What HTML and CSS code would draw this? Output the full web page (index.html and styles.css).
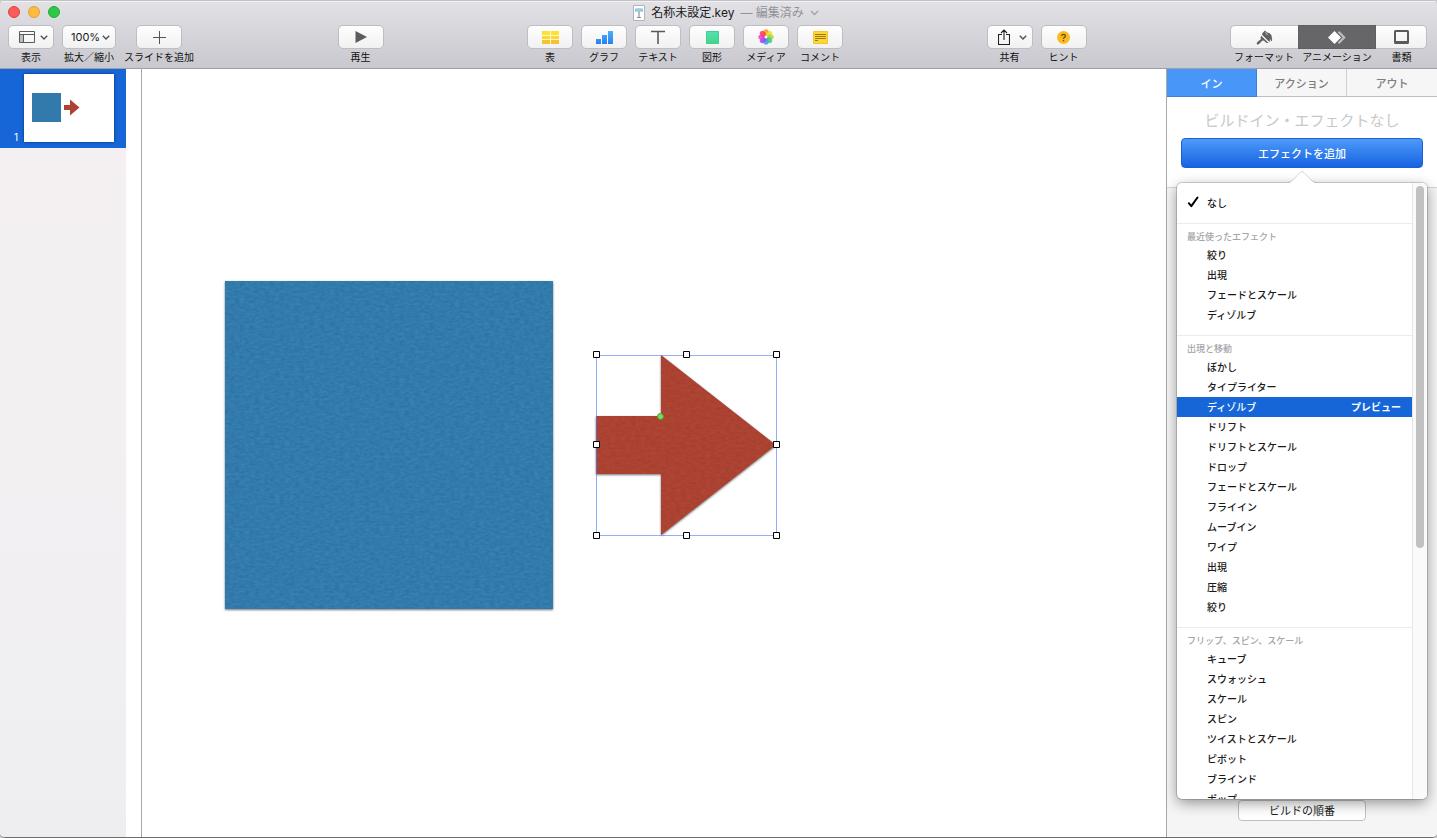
FILE: index.html
```html
<!DOCTYPE html>
<html lang="ja">
<head>
<meta charset="utf-8">
<title>名称未設定.key</title>
<link rel="stylesheet" href="styles.css">
</head>
<body>
<div class="window">
  <header class="chrome">
    <div class="titlebar">
      <div class="lights">
        <button class="light light-close" aria-label="閉じる"></button>
        <button class="light light-min" aria-label="しまう"></button>
        <button class="light light-max" aria-label="拡大"></button>
      </div>
      <div class="doc-title">
        <svg class="doc-icon" width="12" height="16" viewBox="0 0 12 16"><path d="M.5.5h11v15H.5z" fill="#fff" stroke="#b4b4b8"/><path d="M2.500 3.500h7l.5 3H2z" fill="#58b6e6"/><path d="M3 5h6" stroke="#d9e8c8"/><path d="M6 6.500V12M4 12.500h4" stroke="#8a9094" stroke-width="1.200"/></svg>
        <h1 class="doc-name">名称未設定.key</h1>
        <span class="doc-state">— 編集済み</span>
        <svg width="9" height="6" viewBox="0 0 9 6"><path d="M1 1l3.500 3.500L8 1" fill="none" stroke="#a2a1a7" stroke-width="1.300"/></svg>
      </div>
    </div>
    <nav class="toolbar">
      <div class="group">
        <div class="tool">
          <button class="tool-btn with-menu" aria-labelledby="t-view">
            <svg width="16" height="12" viewBox="0 0 16 12"><path d="M1 4h3.500v7H1z" fill="#bdbdbd"/><path d="M.5.5h15v11H.5zM.5 3.500h15M4.500 3.500v8" fill="none" stroke="#5a5a5a"/></svg>
            <svg width="8" height="5" viewBox="0 0 8 5"><path d="M.8.8L4 4 7.200.8" fill="none" stroke="#505050" stroke-width="1.400"/></svg>
          </button>
          <span class="tool-label" id="t-view">表示</span>
        </div>
        <div class="tool">
          <div class="zoom-box">
            <select class="tool-btn zoom" id="zoom"><option>100%</option></select>
            <svg class="zoom-chev" width="8" height="5" viewBox="0 0 8 5"><path d="M.8.8L4 4 7.200.8" fill="none" stroke="#505050" stroke-width="1.400"/></svg>
          </div>
          <label class="tool-label" for="zoom">拡大／縮小</label>
        </div>
        <div class="tool">
          <button class="tool-btn" aria-labelledby="t-add"><svg width="13" height="13" viewBox="0 0 13 13"><path d="M0 6.500h13M6.500 0v13" stroke="#555"/></svg></button>
          <span class="tool-label" id="t-add">スライドを追加</span>
        </div>
      </div>
      <div class="group">
        <div class="tool">
          <button class="tool-btn" aria-labelledby="t-play"><svg width="12" height="12" viewBox="0 0 12 12"><path d="M.5 0L12 6 .5 12z" fill="#5c5c5c"/></svg></button>
          <span class="tool-label" id="t-play">再生</span>
        </div>
      </div>
      <div class="group">
        <div class="tool">
          <button class="tool-btn" aria-labelledby="t-table"><svg width="17" height="13" viewBox="0 0 17 13"><path d="M0 0h17v4H0z" fill="#fde233"/><path d="M0 4h17v5H0z" fill="#fcd636"/><path d="M0 9h17v4H0z" fill="#f6c235"/><path d="M0 4.500h17M0 8.500h17M8.500 0v13" stroke="#fff6c4"/></svg></button>
          <span class="tool-label" id="t-table">表</span>
        </div>
        <div class="tool">
          <button class="tool-btn" aria-labelledby="t-chart"><svg width="17" height="13" viewBox="0 0 17 13"><defs><linearGradient id="bar" x2="0" y2="13" gradientUnits="userSpaceOnUse"><stop stop-color="#49b3f8"/><stop offset="1" stop-color="#2a7ff0"/></linearGradient></defs><path d="M0 8h5v5H0zM6 4h5v9H6zM12 0h5v13h-5z" fill="url(#bar)"/></svg></button>
          <span class="tool-label" id="t-chart">グラフ</span>
        </div>
        <div class="tool">
          <button class="tool-btn" aria-labelledby="t-text"><svg width="14" height="14" viewBox="0 0 14 14"><path d="M0 1.500h14M7 1.500V14" stroke="#5a5a5a" stroke-width="1.600"/></svg></button>
          <span class="tool-label" id="t-text">テキスト</span>
        </div>
        <div class="tool">
          <button class="tool-btn" aria-labelledby="t-shape"><svg width="13" height="13" viewBox="0 0 13 13"><defs><linearGradient id="shp" x2="0" y2="1"><stop stop-color="#55e0b4"/><stop offset="1" stop-color="#43d685"/></linearGradient></defs><path d="M.5.5h12v12H.5z" fill="url(#shp)" stroke="#3fcf91"/></svg></button>
          <span class="tool-label" id="t-shape">図形</span>
        </div>
        <div class="tool">
          <button class="tool-btn" aria-labelledby="t-media"><svg width="16" height="16" viewBox="-8 -8 16 16"><g class="petals"><ellipse cy="-4.500" rx="2.600" ry="3.200" fill="#fb8f20"/><ellipse cy="-4.500" rx="2.600" ry="3.200" fill="#f0dc20" transform="rotate(45)"/><ellipse cy="-4.500" rx="2.600" ry="3.200" fill="#a0dc30" transform="rotate(90)"/><ellipse cy="-4.500" rx="2.600" ry="3.200" fill="#3ccb80" transform="rotate(135)"/><ellipse cy="-4.500" rx="2.600" ry="3.200" fill="#3f98e8" transform="rotate(180)"/><ellipse cy="-4.500" rx="2.600" ry="3.200" fill="#9a40f0" transform="rotate(225)"/><ellipse cy="-4.500" rx="2.600" ry="3.200" fill="#f03cd8" transform="rotate(270)"/><ellipse cy="-4.500" rx="2.600" ry="3.200" fill="#fa3c50" transform="rotate(315)"/></g></svg></button>
          <span class="tool-label" id="t-media">メディア</span>
        </div>
        <div class="tool">
          <button class="tool-btn" aria-labelledby="t-comment"><svg width="15" height="13" viewBox="0 0 15 13"><path d="M.5.5h14v12H.5z" fill="#fdd835" stroke="#f5c32c"/><path d="M2 3.500h11M2 5.500h11M2 7.500h11M2 9.500h3" stroke="#9a7a1a"/></svg></button>
          <span class="tool-label" id="t-comment">コメント</span>
        </div>
      </div>
      <div class="group">
        <div class="tool">
          <button class="tool-btn with-menu" aria-labelledby="t-share">
            <svg width="12" height="16" viewBox="0 0 12 16"><path d="M4 5.500H.5v10h11v-10H8M6 11V1.500M3 4l3-3 3 3" fill="none" stroke="#222" stroke-width="1.100"/></svg>
            <svg width="8" height="5" viewBox="0 0 8 5"><path d="M.8.8L4 4 7.200.8" fill="none" stroke="#505050" stroke-width="1.400"/></svg>
          </button>
          <span class="tool-label" id="t-share">共有</span>
        </div>
        <div class="tool">
          <button class="tool-btn" aria-labelledby="t-hint"><svg width="13" height="13" viewBox="0 0 13 13"><circle cx="6.500" cy="6.500" r="6.500" fill="#fbba21"/><path d="M4.600 5.100Q4.700 3.300 6.500 3.300T8.400 4.900Q8.400 5.800 7.300 6.400 6.500 6.900 6.500 8M6.500 9v1.300" fill="none" stroke="#6b4a08" stroke-width="1.200"/></svg></button>
          <span class="tool-label" id="t-hint">ヒント</span>
        </div>
      </div>
      <div class="group segments">
        <div class="tool seg seg-format">
          <button class="tool-btn" aria-labelledby="t-format"><svg width="17" height="15" viewBox="0 0 17 15"><path d="M6.500 3L9 .5 11 2.500Q14 2.500 15.500 5.500L16.200 10Q15.800 12 14.800 10.500L14 8.500 13.500 12.500 6 5z" fill="#606060"/><path d="M5.300 5.700L12.500 12.900 10.500 13 8 10.800 6.500 10.500 3 14Q1.800 15 1 14.200T1.200 12.300L5 9 4.500 7.500z" fill="#606060"/><path d="M5.500 4.800l7.800 7.800" stroke="#f6f6f6"/><path d="M9.500 2.500l2 2.500" stroke="#e8e8e8" stroke-width=".8"/></svg></button>
          <span class="tool-label" id="t-format">フォーマット</span>
        </div>
        <div class="tool seg seg-anim">
          <button class="tool-btn active" aria-pressed="true" aria-labelledby="t-anim"><svg width="18" height="13" viewBox="0 0 18 13"><path d="M10.500.8l5.700 5.700-5.700 5.700" fill="none" stroke="#bcbcbd" stroke-width="2.200"/><path d="M6.500 0L13 6.500 6.500 13 0 6.500z" fill="#fff"/></svg></button>
          <span class="tool-label" id="t-anim">アニメーション</span>
        </div>
        <div class="tool seg seg-doc">
          <button class="tool-btn" aria-labelledby="t-doc"><svg width="15" height="14" viewBox="0 0 15 14"><rect x="1" y="1" width="13" height="12" rx=".5" fill="none" stroke="#5a5a5a" stroke-width="2"/><path d="M1 11.500h13" stroke="#5a5a5a"/></svg></button>
          <span class="tool-label" id="t-doc">書類</span>
        </div>
      </div>
    </nav>
  </header>

  <div class="workspace">
    <aside class="slides">
      <button class="slide-row">
        <span class="slide-num">1</span>
        <span class="thumb">
          <svg width="90" height="68" viewBox="0 0 90 68"><path d="M8 19h29v29H8z" fill="#327aac"/><path d="M40 31h6v-5.500l9.500 8L46 41.500V36h-6z" fill="#ae4333"/></svg>
        </span>
      </button>
    </aside>
    <main class="canvas">
      <svg class="shape square" width="328" height="328" viewBox="0 0 328 328">
        <defs>
          <filter id="paper-blue" x="0" y="0" width="1" height="1" color-interpolation-filters="sRGB"><feTurbulence type="fractalNoise" baseFrequency=".2 .4" numOctaves="4" seed="4"/><feColorMatrix values="0 0 0 0 .08  0 0 0 0 .32  0 0 0 0 .5  .5 0 0 0 -.12"/><feComposite in2="SourceGraphic" operator="in"/></filter>
        </defs>
        <path d="M0 0h328v328H0z" fill="#3781b3"/>
        <path d="M0 0h328v328H0z" filter="url(#paper-blue)"/>
      </svg>
      <div class="selection">
        <svg class="shape arrow" width="181" height="181" viewBox="0 0 181 181">
          <defs>
            <filter id="paper-red" x="0" y="0" width="1" height="1" color-interpolation-filters="sRGB"><feTurbulence type="fractalNoise" baseFrequency=".2 .4" numOctaves="4" seed="8"/><feColorMatrix values="0 0 0 0 .54  0 0 0 0 .18  0 0 0 0 .12  .5 0 0 0 -.12"/><feComposite in2="SourceGraphic" operator="in"/></filter>
          </defs>
          <path d="M0 61h65V0l115 90L65 180v-61H0z" fill="#b14635"/>
          <path d="M0 61h65V0l115 90L65 180v-61H0z" filter="url(#paper-red)"/>
        </svg>
        <svg class="handles" width="189" height="190" viewBox="-4 -5 189 190">
          <path d="M.5.500h180v180H.5z" fill="none" stroke="#4a7cf4" stroke-opacity=".6"/>
          <g fill="#fff" stroke="#000"><path d="M-2.500-3.500h6v6h-6zM87.500-3.500h6v6h-6zM177.500-3.500h6v6h-6zM-2.500 86.500h6v6h-6zM177.500 86.500h6v6h-6zM-2.500 177.500h6v6h-6zM87.500 177.500h6v6h-6zM177.500 177.500h6v6h-6z"/></g>
          <circle cx="64.500" cy="61.500" r="3" fill="#7ddc54" stroke="#4a9436"/>
        </svg>
      </div>
    </main>
    <aside class="inspector">
      <div class="tabs" role="tablist">
        <button class="tab current" role="tab" aria-selected="true">イン</button>
        <button class="tab" role="tab">アクション</button>
        <button class="tab" role="tab">アウト</button>
      </div>
      <section class="effect">
        <h2 class="effect-title">ビルドイン・エフェクトなし</h2>
        <button class="add-effect">エフェクトを追加</button>
      </section>
      <div class="order"><button class="order-btn">ビルドの順番</button></div>

      <div class="popover">
        <svg class="pointer" width="28" height="13" viewBox="0 0 28 13"><path d="M0 12Q3 11.500 5 9L12 1.500Q14-.5 16 1.500L23 9Q25 11.500 28 12V13H0z" fill="#fff"/><path d="M0 11.500Q3 11 5 9L12 1.500Q14-.5 16 1.500L23 9Q25 11 28 11.500" fill="none" stroke="#000" stroke-opacity=".16"/></svg>
        <div class="menu-clip">
          <div class="menu">
            <button class="none-item"><svg width="12" height="12" viewBox="0 0 12 12"><path d="M1.800 7.200L4.300 10.200 10.500 1.500" fill="none" stroke="#000" stroke-width="2" stroke-linecap="round" stroke-linejoin="round"/></svg>なし</button>
            <section class="menu-group">
              <h3 class="menu-head">最近使ったエフェクト</h3>
              <button class="item">絞り</button>
              <button class="item">出現</button>
              <button class="item">フェードとスケール</button>
              <button class="item">ディゾルブ</button>
            </section>
            <section class="menu-group">
              <h3 class="menu-head">出現と移動</h3>
              <button class="item">ぼかし</button>
              <button class="item">タイプライター</button>
              <button class="item chosen">ディゾルブ<strong>プレビュー</strong></button>
              <button class="item">ドリフト</button>
              <button class="item">ドリフトとスケール</button>
              <button class="item">ドロップ</button>
              <button class="item">フェードとスケール</button>
              <button class="item">フライイン</button>
              <button class="item">ムーブイン</button>
              <button class="item">ワイプ</button>
              <button class="item">出現</button>
              <button class="item">圧縮</button>
              <button class="item">絞り</button>
            </section>
            <section class="menu-group">
              <h3 class="menu-head">フリップ、スピン、スケール</h3>
              <button class="item">キューブ</button>
              <button class="item">スウォッシュ</button>
              <button class="item">スケール</button>
              <button class="item">スピン</button>
              <button class="item">ツイストとスケール</button>
              <button class="item">ピボット</button>
              <button class="item">ブラインド</button>
              <button class="item">ポップ</button>
            </section>
          </div>
          <div class="track"><div class="thumb-bar"></div></div>
        </div>
      </div>
    </aside>
  </div>
</div>
</body>
</html>
```
FILE: styles.css
```css
* { box-sizing: border-box; }

body {
  margin: 0;
  background: #c9c9cb;
  font-family: "Liberation Sans", "Noto Sans CJK JP", sans-serif;
  font-size: 10px;
  color: #1a1a1a;
}

button, select {
  margin: 0;
  padding: 0;
  border: 0;
  background: none;
  font: inherit;
  color: inherit;
}

h1, h2, h3 { margin: 0; font-weight: 400; }
svg { display: block; flex: none; }

.window {
  display: flex;
  flex-direction: column;
  height: 100vh;
  border-bottom: 1px solid #6c6c6c;
  border-radius: 5px;
  overflow: hidden;
}

/* Title bar and toolbar */
.chrome {
  flex: none;
  border-top: 1px solid #c2c2c4;
  border-bottom: 1px solid #a09fa5;
  background: linear-gradient(#e2e1e6, #c9c8ce);
  box-shadow: inset 0 1px #f2f2f4;
}

.titlebar {
  position: relative;
  display: flex;
  align-items: center;
  justify-content: center;
  height: 24px;
}

.lights {
  position: absolute;
  left: 8px;
  top: 5px;
  display: flex;
  gap: 8px;
}

.light { width: 12px; height: 12px; border-radius: 50%; }
.light-close { background: #fc5b57; border: 1px solid #e2443f; }
.light-min { background: #fdbc40; border: 1px solid #e0a033; }
.light-max { background: #2dc84a; border: 1px solid #1eae35; }

.doc-title {
  display: flex;
  align-items: center;
  gap: 6px;
  padding-left: 15px;
  font-family: Inter, "Noto Sans CJK JP", sans-serif;
  font-size: 12px;
  line-height: 18px;
}

.doc-name { font-size: 12px; }
.doc-state { color: #929197; }

.toolbar {
  display: flex;
  justify-content: space-between;
  padding: 0 10px 1px 8px;
}

.group { display: flex; gap: 8px; }

.tool {
  display: flex;
  flex-direction: column;
  align-items: center;
  min-width: 46px;
}

.tool-btn {
  display: flex;
  align-items: center;
  justify-content: center;
  width: 46px;
  height: 24px;
  border: 1px solid #bebdc2;
  border-radius: 5px;
  background: linear-gradient(#fefefe, #f1f1f1);
}

.with-menu {
  justify-content: space-between;
  padding: 0 5px 0 10px;
}

.tool-label {
  color: #111;
  line-height: 18px;
  white-space: nowrap;
}

.zoom-box { position: relative; }

.zoom {
  width: 54px;
  padding-left: 8px;
  appearance: none;
  font-family: Inter, sans-serif;
  font-size: 11px;
}

.zoom-chev {
  position: absolute;
  right: 6px;
  top: 10px;
  pointer-events: none;
}

.segments { gap: 0; }
.seg .tool-btn { width: 100%; border-radius: 0; }
.seg-format { width: 68px; }
.seg-anim { width: 78px; }
.seg-doc { width: 51px; }
.seg-format .tool-btn { border-right: 0; border-radius: 5px 0 0 5px; }
.seg-doc .tool-btn { border-left: 0; border-radius: 0 5px 5px 0; }
.tool-btn.active { background: #666668; border-color: #606062; }
.petals ellipse { fill-opacity: .85; }

/* Main area */
.workspace {
  flex: 1;
  display: flex;
  min-height: 0;
  background: #fff;
}

.slides {
  flex: none;
  width: 126px;
  background: linear-gradient(#f4f0f1, #f3f0f2 50%, #eeeef1);
}

.slide-row {
  display: flex;
  align-items: flex-end;
  justify-content: flex-end;
  gap: 6px;
  width: 100%;
  padding: 5px 12px 6px 0;
  background: #1666d8;
}

.slide-num {
  color: #fff;
  font-family: Inter, sans-serif;
  line-height: 10px;
}

.thumb {
  background: #fff;
  box-shadow: 0 0 3px rgba(0, 0, 0, .5);
}

.canvas {
  position: relative;
  flex: 1;
  margin-left: 15px;
  border-left: 1px solid #a8a8a8;
  overflow: hidden;
}

.shape { filter: drop-shadow(0 1px 1px rgba(0, 0, 0, .55)); }
.square { position: absolute; left: 83px; top: 212px; }
.selection { position: absolute; left: 454px; top: 286px; }
.handles { position: absolute; left: -4px; top: -5px; }

/* Inspector */
.inspector {
  position: relative;
  flex: none;
  display: flex;
  flex-direction: column;
  width: 271px;
  border-left: 1px solid #a8a8a8;
  background: #f5f5f5;
}

.tabs {
  display: grid;
  grid-template-columns: repeat(3, 1fr);
  height: 28px;
}

.tab {
  border-right: 1px solid #cfcfd1;
  border-bottom: 1px solid #bfbfc3;
  background: #f6f6f6;
  color: #7d7d7d;
  font-size: 11px;
  font-weight: 500;
}

.tab:last-child { border-right: 0; }

.tab.current {
  border-color: #3a7fdc;
  background: #4896f8;
  color: #fff;
}

.effect {
  display: flex;
  flex-direction: column;
  height: 91px;
  padding: 12px 14px 0;
  border-bottom: 1px solid #d6d6d6;
  background: #fff;
}

.effect-title {
  color: #c8c8c8;
  font-size: 15px;
  line-height: 24px;
  text-align: center;
  white-space: nowrap;
}

.add-effect {
  height: 30px;
  margin-top: 5px;
  border: 1px solid #1b5fd6;
  border-radius: 4px;
  background: linear-gradient(#4e9af9, #1663e2);
  color: #fff;
  font-size: 11px;
  font-weight: 500;
}

.order {
  display: flex;
  justify-content: center;
  margin-top: auto;
  padding-bottom: 16px;
}

.order-btn {
  width: 128px;
  height: 21px;
  padding-bottom: 2px;
  border: 1px solid #c0c0c0;
  border-radius: 4px;
  background: #fff;
  font-size: 11px;
}

/* Effect list */
.popover {
  position: absolute;
  top: 114px;
  right: 10px;
  bottom: 38px;
  left: 10px;
  border-radius: 5px;
  background: #fff;
  box-shadow: 0 0 0 1px rgba(0, 0, 0, .16), 0 4px 14px rgba(0, 0, 0, .4);
}

.pointer {
  position: absolute;
  top: -12px;
  left: 50%;
  margin-left: -14px;
}

.menu-clip {
  display: flex;
  height: 100%;
  border-radius: 5px;
  overflow: hidden;
}

.menu { flex: 1; font-weight: 500; }

.none-item {
  display: flex;
  align-items: center;
  gap: 8px;
  width: 100%;
  height: 40px;
  padding: 0 0 2px 10px;
}

.menu-group {
  padding-bottom: 10px;
  border-top: 1px solid #ebebeb;
}

.menu-head {
  padding: 5px 10px 0;
  color: #a4a4a4;
  font-size: 9px;
  font-weight: 500;
  line-height: 16px;
}

.item {
  display: flex;
  align-items: center;
  justify-content: space-between;
  width: 100%;
  height: 20px;
  padding: 0 11px 2px 30px;
}

.item.chosen { background: #1666d8; color: #fff; }

.track {
  flex: none;
  width: 15px;
  padding: 3px 3px 0;
  border-left: 1px solid #e6e6e6;
  background: #fafafa;
}

.thumb-bar {
  width: 8px;
  height: 59%;
  border-radius: 4px;
  background: #c1c1c1;
}
```
